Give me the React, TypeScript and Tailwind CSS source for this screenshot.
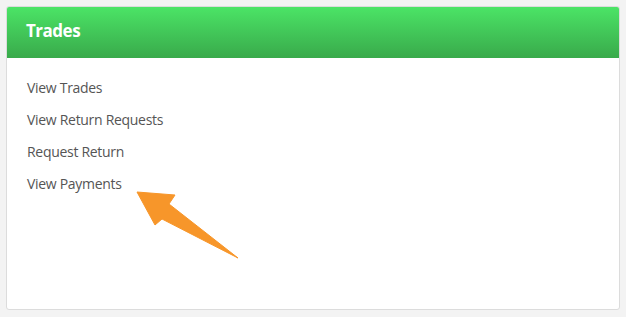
const LINKS = ['View Trades', 'View Return Requests', 'Request Return', 'View Payments'];

function Arrow() {
  return (
    <svg className="absolute left-0 top-0" width="626" height="317" viewBox="0 0 626 317">
      <path
        d="M137 192 L175 195 L169 204 L238 258 L162 219 L155 225 Z"
        fill="#f7962a"
        stroke="#f7962a"
        strokeWidth="1"
        strokeLinejoin="round"
      />
    </svg>
  );
}

export default function App() {
  return (
    <div
      className="relative h-[317px] w-[626px] bg-[#f3f3f3] p-[6px] pb-[7px]"
      style={{ fontFamily: '"Open Sans", "Noto Sans", sans-serif' }}
    >
      <div className="flex h-full flex-col overflow-hidden rounded-[3px] border border-[#dcdcdc] bg-white">
        <div className="flex h-[51px] items-center bg-gradient-to-b from-[#4be466] to-[#39aa4b] pl-[19px] pb-[3px]">
          <h1 className="text-[17px] font-bold tracking-[-0.5px] text-white">Trades</h1>
        </div>
        <ul className="flex flex-col pt-[18px] pl-[20px]">
          {LINKS.map((l) => (
            <li key={l} className="h-[32px] text-[14px] leading-[24px] tracking-[-0.3px] text-[#555555]">
              {l}
            </li>
          ))}
        </ul>
      </div>
      <Arrow />
    </div>
  );
}
